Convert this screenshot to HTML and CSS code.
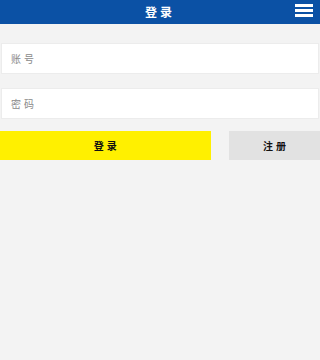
FILE: index.html
```html
<!DOCTYPE html>
<html lang="zh">
<head>
<meta charset="utf-8">
<meta name="viewport" content="width=device-width, initial-scale=1">
<title>登录</title>
<link rel="stylesheet" href="styles.css">
</head>
<body>
<header class="topbar">
  <h1 class="title">登录</h1>
  <span class="menu" aria-label="菜单"><i></i><i></i><i></i></span>
</header>
<main class="form">
  <input class="field" type="text" placeholder="账号">
  <input class="field field-pw" type="password" placeholder="密码">
  <div class="actions">
    <button class="btn btn-login" type="button">登录</button>
    <button class="btn btn-reg" type="button">注册</button>
  </div>
</main>
</body>
</html>
```
FILE: styles.css
```css
* { box-sizing: border-box; }
html, body {
  margin: 0;
  padding: 0;
  background: #f3f3f3;
  font-family: "Noto Sans CJK SC", "Noto Sans", sans-serif;
}
.topbar {
  position: relative;
  height: 24px;
  background: #0b51a5;
  display: flex;
  align-items: center;
  justify-content: center;
}
.title {
  margin: 0;
  color: #fff;
  font-size: 12px;
  font-weight: bold;
  letter-spacing: 3px;
  line-height: 24px;
}
.menu {
  position: absolute;
  right: 7px;
  top: 4px;
  width: 18px;
  height: 13px;
  display: flex;
  flex-direction: column;
  justify-content: space-between;
}
.menu i {
  display: block;
  height: 3px;
  background: #fff;
}
.form {
  padding-top: 19px;
  display: flex;
  flex-direction: column;
}
.field {
  display: block;
  height: 31px;
  margin: 0 1px;
  border: 1px solid #ececec;
  background: #fff;
  padding: 0 9px;
  font-family: inherit;
  font-size: 10px;
  letter-spacing: 3px;
  color: #333;
  outline: none;
}
.field::placeholder { color: #8a8a8a; }
.field-pw { margin-top: 14px; }
.actions {
  margin-top: 12px;
  display: flex;
  justify-content: space-between;
}
.btn {
  height: 29px;
  border: 0;
  font-family: inherit;
  font-size: 10px;
  font-weight: bold;
  letter-spacing: 3px;
  padding: 0 0 0 3px;
  color: #111;
}
.btn-login {
  width: 65.8%;
  background: #fff000;
}
.btn-reg {
  width: 28.4%;
  background: #e2e2e2;
}
```
